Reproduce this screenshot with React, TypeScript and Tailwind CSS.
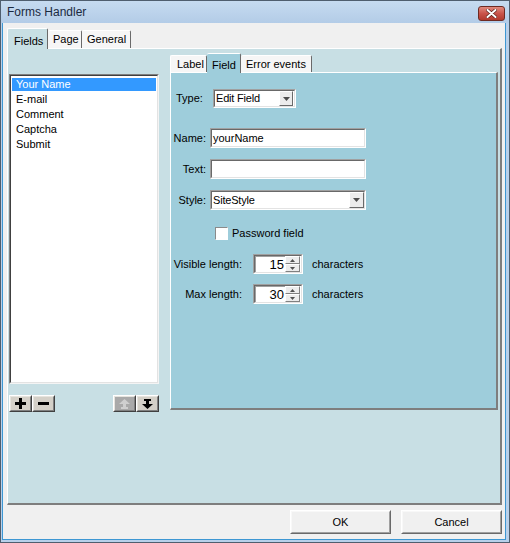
import React from "react";

const items = ["Your Name", "E-mail", "Comment", "Captcha", "Submit"];

function Sunken({ className = "", children }: { className?: string; children?: React.ReactNode }) {
    return (
        <div className={`border border-t-[#a0a0a0] border-l-[#a0a0a0] border-b-white border-r-white ${className}`}>
            <div className="flex h-full w-full items-center border border-t-[#696969] border-l-[#696969] border-b-[#e3e3e3] border-r-[#e3e3e3] bg-white">
                {children}
            </div>
        </div>
    );
}

function Raised({ className = "", children }: { className?: string; children?: React.ReactNode }) {
    return (
        <div className={`border border-t-white border-l-white border-b-[#404040] border-r-[#404040] ${className}`}>
            <div className="flex h-full w-full items-center justify-center border border-t-[#e6e4de] border-l-[#e6e4de] border-b-[#808080] border-r-[#808080]">
                {children}
            </div>
        </div>
    );
}

function DropArrow({ size }: { size: string }) {
    return (
        <div className={`flex shrink-0 items-center justify-center border border-t-white border-l-white border-b-[#6a6a6a] border-r-[#6a6a6a] bg-[#ececec] ${size}`}>
            <svg width="7" height="4" viewBox="0 0 7 4">
                <path d="M0 0H7L3.5 4Z" fill="#4d4d4d" />
            </svg>
        </div>
    );
}

function Combo({ value, className }: { value: string; className: string }) {
    return (
        <Sunken className={className}>
            <span className="flex-1 pl-[1px] tracking-[-0.2px]">{value}</span>
            <DropArrow size="h-full w-[15px]" />
        </Sunken>
    );
}

function Spin({ value }: { value: string }) {
    return (
        <Sunken className="h-[20px] w-[50px]">
            <div className="flex h-full flex-1 items-center justify-end border-t border-l border-[#a0a0a0] pr-[1px] text-[13px]">
                {value}
            </div>
            <div className="flex h-full w-[15px] flex-col">
                {["M0 3H5L2.5 0Z", "M0 0H5L2.5 3Z"].map((d) => (
                    <div
                        key={d}
                        className="flex flex-1 items-center justify-center border border-t-white border-l-white border-b-[#808080] border-r-[#808080] bg-[#ececec]"
                    >
                        <svg width="5" height="3" viewBox="0 0 5 3">
                            <path d={d} fill="#505050" />
                        </svg>
                    </div>
                ))}
            </div>
            <div className="h-full w-[1px] bg-white" />
        </Sunken>
    );
}

export default function App() {
    return (
        <div className="flex h-[543px] w-[510px] flex-col border border-[#4f5e6e] bg-[#b8d0ea] font-['Liberation_Sans',Arial,sans-serif] text-[11px] text-black">
            {/* title bar */}
            <div className="flex h-[22px] shrink-0 items-center bg-linear-to-b from-[#c6dbf0] to-[#b3cce7] pl-[6px] pr-[4px]">
                <span className="text-[12px] text-[#1b2a3f]">Forms Handler</span>
                <div className="ml-auto mt-[2px] flex h-[15px] w-[27px] items-center justify-center rounded-[3px] border border-[#6e2a22] bg-linear-to-b from-[#e08a7e] via-[#c9544a] to-[#b13a2e]">
                    <svg width="11" height="9" viewBox="0 0 11 9">
                        <path d="M1.5 1L9.5 8M9.5 1L1.5 8" stroke="#5a1f18" strokeWidth="3.4" strokeLinecap="round" />
                        <path d="M1.5 1L9.5 8M9.5 1L1.5 8" stroke="white" strokeWidth="2" strokeLinecap="round" />
                    </svg>
                </div>
            </div>

            {/* dialog body */}
            <div className="ml-[1px] mr-[3px] mb-[2px] flex flex-1 flex-col border-x border-b border-[#3d97d3] bg-[#f0f0f0] pl-[4px] pr-[3px] pt-[5px]">
                {/* outer tabs */}
                <div className="flex h-[20px] items-end">
                    <div className="relative z-10 -mb-px flex h-[21px] w-[41px] items-start rounded-t-[2px] border-t border-l border-r border-t-white border-l-white border-r-[#6a6a6a] bg-[#c8dfe4] pl-[6px] pt-[4px]">
                        Fields
                    </div>
                    <div className="flex h-[18px] w-[34px] items-center rounded-t-[2px] border-t border-r border-t-white border-r-[#6a6a6a] bg-[#f6f6f6] pl-[5px]">
                        Page
                    </div>
                    <div className="flex h-[18px] w-[49px] items-center rounded-t-[2px] border-t border-r border-t-white border-r-[#6a6a6a] bg-[#f6f6f6] pl-[5px]">
                        General
                    </div>
                </div>

                <div className="flex h-[457px] w-[495px] border-t border-l border-t-white border-l-white border-r-2 border-b-2 border-r-[#7e7e7e] border-b-[#7e7e7e] bg-[#c8dfe4]">
                    {/* list column */}
                    <div className="ml-[1px] flex w-[150px] flex-col pt-[25px]">
                        <div className="h-[310px] border border-t-[#808080] border-l-[#808080] border-b-[#f4f4f4] border-r-[#f4f4f4]">
                            <div className="h-full border border-t-[#404040] border-l-[#404040] border-b-[#e3e3e3] border-r-[#e3e3e3] bg-white p-[1px]">
                                {items.map((it, i) => (
                                    <div key={it} className="flex h-[15px] items-center">
                                        <div
                                            className={`flex h-[13px] w-full items-center pl-[4px] ${
                                                i === 0 ? "bg-[#3399ff] text-white" : ""
                                            }`}
                                        >
                                            {it}
                                        </div>
                                    </div>
                                ))}
                            </div>
                        </div>
                        <div className="mt-[11px] flex h-[17px]">
                            <Raised className="w-[23px] bg-[#d4d0c8]">
                                <svg width="11" height="11" viewBox="0 0 11 11">
                                    <path d="M4 0H7V4H11V7H7V11H4V7H0V4H4Z" fill="black" />
                                </svg>
                            </Raised>
                            <Raised className="w-[23px] bg-[#d4d0c8]">
                                <svg width="11" height="3" viewBox="0 0 11 3">
                                    <rect width="11" height="3" fill="black" />
                                </svg>
                            </Raised>
                            <Raised className="ml-auto w-[23px] bg-[#a9a9a9]">
                                <svg width="11" height="10" viewBox="0 0 11 10">
                                    <path d="M5.5 0L11 5H0Z M4 5H7V8H4Z M2 8H9V10H2Z" fill="#cfcfcf" />
                                </svg>
                            </Raised>
                            <Raised className="w-[23px] bg-[#d4d0c8]">
                                <svg width="11" height="10" viewBox="0 0 11 10">
                                    <path d="M2 0H9V2H2Z M4 2H7V5H4Z M0 5H11L5.5 10Z" fill="black" />
                                </svg>
                            </Raised>
                        </div>
                    </div>

                    {/* field tabs */}
                    <div className="ml-[11px] flex w-[328px] flex-col pt-[4px]">
                        <div className="flex h-[19px] items-end">
                            <div className="flex h-[17px] w-[37px] items-center rounded-t-[2px] border-t border-l border-r border-t-white border-l-white border-r-[#6a6a6a] bg-[#f6f6f6] pl-[6px] pt-[1px]">
                                Label
                            </div>
                            <div className="relative z-10 -mb-px flex h-[20px] w-[34px] items-start rounded-t-[2px] border-t border-r border-t-white border-r-[#6a6a6a] bg-[#9ecddb] pl-[5px] pt-[3px]">
                                Field
                            </div>
                            <div className="flex h-[17px] w-[71px] items-center rounded-t-[2px] border-t border-r border-t-white border-r-[#6a6a6a] bg-[#f6f6f6] pl-[5px] pt-[1px]">
                                Error events
                            </div>
                        </div>

                        <div className="flex h-[338px] flex-col border-t border-l border-t-white border-l-white border-r-2 border-b-2 border-r-[#7e7e7e] border-b-[#7e7e7e] bg-[#9ecddb]">
                            <div className="mt-[16px] flex h-[19px] items-center pl-[5px]">
                                <span className="w-[37px]">Type:</span>
                                <Sunken className="h-[19px] w-[83px]">
                                    <span className="flex-1 pl-[1px] tracking-[-0.2px]">Edit Field</span>
                                    <DropArrow size="h-[15px] w-[14px] mr-[1px]" />
                                </Sunken>
                            </div>

                            <div className="mt-[20px] flex h-[20px] items-center">
                                <span className="w-[35px] text-right">Name:</span>
                                <Sunken className="ml-[4px] h-[20px] w-[156px]">
                                    <span className="pl-[1px]">yourName</span>
                                </Sunken>
                            </div>

                            <div className="mt-[11px] flex h-[20px] items-center">
                                <span className="w-[35px] text-right">Text:</span>
                                <Sunken className="ml-[4px] h-[20px] w-[156px]" />
                            </div>

                            <div className="mt-[11px] flex h-[20px] items-center">
                                <span className="w-[35px] text-right">Style:</span>
                                <Combo value="SiteStyle" className="ml-[4px] h-[20px] w-[156px]" />
                            </div>

                            <div className="mt-[17px] flex h-[13px] items-center pl-[44px]">
                                <div className="h-[13px] w-[13px] border border-t-[#8a8a8a] border-l-[#8a8a8a] border-b-white border-r-white bg-white" />
                                <span className="ml-[4px]">Password field</span>
                            </div>

                            <div className="mt-[14px] flex h-[20px] items-center">
                                <span className="w-[71px] text-right">Visible length:</span>
                                <div className="ml-[11px]">
                                    <Spin value="15" />
                                </div>
                                <span className="ml-[9px]">characters</span>
                            </div>

                            <div className="mt-[10px] flex h-[20px] items-center">
                                <span className="w-[71px] text-right">Max length:</span>
                                <div className="ml-[11px]">
                                    <Spin value="30" />
                                </div>
                                <span className="ml-[9px]">characters</span>
                            </div>
                        </div>
                    </div>
                </div>

                {/* dialog buttons */}
                <div className="mt-[5px] flex h-[24px] justify-end gap-[10px]">
                    {["OK", "Cancel"].map((b) => (
                        <div
                            key={b}
                            className="w-[101px] border border-t-white border-l-white border-b-[#696969] border-r-[#696969] bg-[#f0f0f0]"
                        >
                            <div className="flex h-full items-center justify-center border border-t-[#f8f8f8] border-l-[#f8f8f8] border-b-[#a0a0a0] border-r-[#a0a0a0]">
                                {b}
                            </div>
                        </div>
                    ))}
                </div>
            </div>
        </div>
    );
}
